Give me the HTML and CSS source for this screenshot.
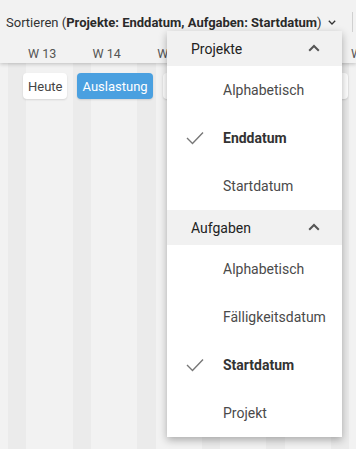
FILE: index.html
```html
<!DOCTYPE html>
<html lang="de">
<head>
<meta charset="utf-8">
<title>Sortieren</title>
<link rel="stylesheet" href="styles.css">
</head>
<body>
<div class="page">
  <header class="topbar">
    <div class="sortrow">
      <span class="sort-label">Sortieren (<b>Projekte: Enddatum, Aufgaben: Startdatum</b>)</span>
      <svg class="caret" width="8" height="5" viewBox="0 0 8 5"><polyline points="0.8,0.8 4,4 7.2,0.8" fill="none" stroke="#333" stroke-width="1.3"/></svg>
      <span class="divider"></span>
    </div>
    <div class="weeks">
      <span class="week">W 13</span>
      <span class="week">W 14</span>
      <span class="week">W 15</span>
      <span class="week">W 16</span>
      <span class="week">W 17</span>
      <span class="week">W 18</span>
    </div>
  </header>
  <main class="timeline">
    <div class="toolbar">
      <button class="btn">Heute</button>
      <button class="btn btn-active">Auslastung</button>
      <button class="btn btn-wide">Filter</button>
    </div>
  </main>

  <div class="menu">
    <div class="menu-head">
      <span>Projekte</span>
      <svg class="chev" width="12" height="8" viewBox="0 0 12 8"><polyline points="1.2,6.8 6,2 10.8,6.8" fill="none" stroke="#555" stroke-width="2"/></svg>
    </div>
    <div class="menu-item">Alphabetisch</div>
    <div class="menu-item selected">
      <svg class="check" width="18" height="14" viewBox="0 0 18 14"><polyline points="1,7 6.5,12.5 17,1.5" fill="none" stroke="#777" stroke-width="1.4"/></svg>
      Enddatum
    </div>
    <div class="menu-item">Startdatum</div>
    <div class="menu-head">
      <span>Aufgaben</span>
      <svg class="chev" width="12" height="8" viewBox="0 0 12 8"><polyline points="1.2,6.8 6,2 10.8,6.8" fill="none" stroke="#555" stroke-width="2"/></svg>
    </div>
    <div class="menu-item">Alphabetisch</div>
    <div class="menu-item">Fälligkeitsdatum</div>
    <div class="menu-item selected">
      <svg class="check" width="18" height="14" viewBox="0 0 18 14"><polyline points="1,7 6.5,12.5 17,1.5" fill="none" stroke="#777" stroke-width="1.4"/></svg>
      Startdatum
    </div>
    <div class="menu-item">Projekt</div>
  </div>
</div>
</body>
</html>
```

FILE: styles.css
```css
html, body {
  margin: 0;
  padding: 0;
}
body {
  font-family: Roboto, "Liberation Sans", sans-serif;
  background: #f2f2f2;
  width: 356px;
  height: 449px;
  overflow: hidden;
}
.page {
  position: relative;
  height: 449px;
  overflow: hidden;
  display: flex;
  flex-direction: column;
}
.topbar {
  position: relative;
  z-index: 2;
  background: #f2f2f2;
  height: 63px;
  box-shadow: 0 1px 4px rgba(0, 0, 0, 0.22);
  display: flex;
  flex-direction: column;
}
.sortrow {
  height: 44px;
  display: flex;
  align-items: center;
  padding-left: 6px;
  white-space: nowrap;
  overflow: hidden;
}
.sort-label {
  font-size: 13px;
  color: #333;
}
.sort-label b {
  font-weight: 700;
  color: #2a2a2a;
}
.caret {
  margin-left: 6px;
  margin-top: 1px;
  flex: none;
}
.divider {
  flex: none;
  width: 1px;
  height: 20px;
  background: #d0d0d0;
  margin-left: 16px;
}
.weeks {
  height: 19px;
  display: flex;
  align-items: center;
  padding-left: 28px;
  white-space: nowrap;
  overflow: hidden;
}
.week {
  flex: none;
  width: 64.6px;
  font-size: 12.5px;
  color: #555;
}
.timeline {
  flex: 1;
  background-color: #f2f2f2;
  background-image: repeating-linear-gradient(to right, #ebebeb 0, #ebebeb 18.5px, transparent 18.5px, transparent 64.6px);
  background-position: 8px 0;
}
.toolbar {
  display: flex;
  gap: 10px;
  padding: 10px 0 0 23px;
}
.btn {
  font-family: Roboto, "Liberation Sans", sans-serif;
  font-size: 13px;
  height: 26px;
  padding: 0 5px;
  border: none;
  border-radius: 4px;
  background: #fff;
  color: #444;
  box-shadow: 0 1px 2px rgba(0, 0, 0, 0.12);
}
.btn-active {
  background: #4aa0e0;
  color: #fff;
}
.btn-wide {
  width: 185px;
}
.menu {
  position: absolute;
  z-index: 5;
  left: 167px;
  top: 31px;
  width: 175px;
  background: #fff;
  box-shadow: 0 3px 8px rgba(0, 0, 0, 0.3);
  display: flex;
  flex-direction: column;
}
.menu-head {
  height: 35px;
  background: #f1f1f1;
  display: flex;
  align-items: center;
  justify-content: space-between;
  padding: 0 22px 0 24px;
  font-size: 14px;
  color: #222;
}
.chev {
  margin-top: -2px;
}
.menu-item {
  position: relative;
  height: 48px;
  display: flex;
  align-items: center;
  padding-left: 56px;
  font-size: 14px;
  color: #4a4a4a;
}
.menu-item.selected {
  font-weight: 700;
  color: #333;
}
.check {
  position: absolute;
  left: 19px;
  top: 17px;
}
```
